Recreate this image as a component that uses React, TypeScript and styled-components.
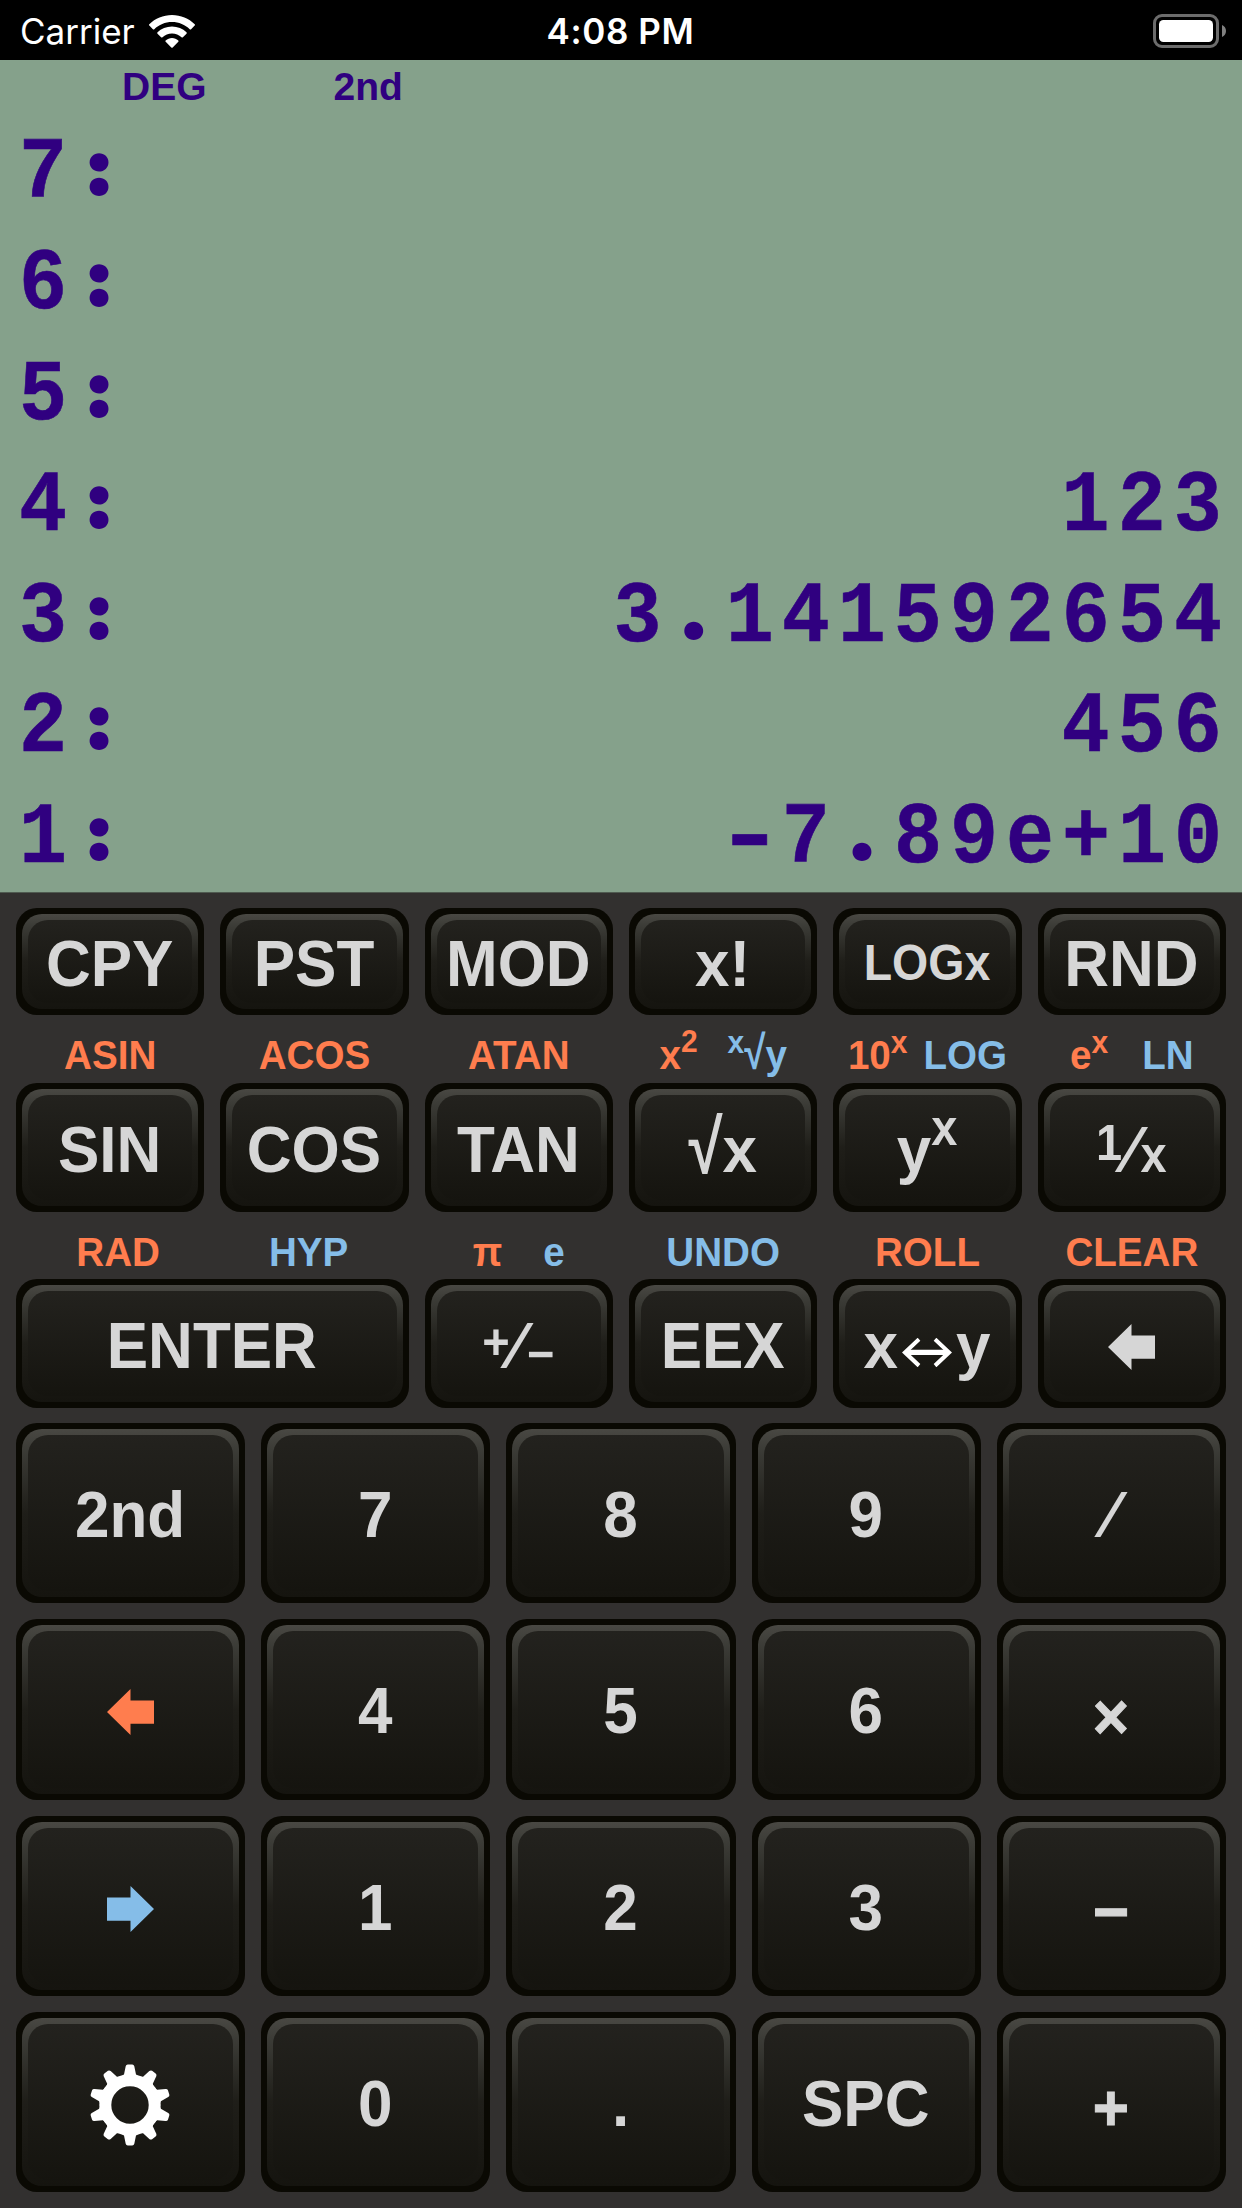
import React from "react";
import styled, { createGlobalStyle } from "styled-components";

const SANS = `"Liberation Sans", Arial, Helvetica, sans-serif`;
const ORANGE = "#ff7d4e";
const BLUE = "#85bde8";
const KEY_TEXT = "#d6d6d6";

const GlobalStyle = createGlobalStyle`
  body { margin: 0; background: #32302f; }
`;

const Screen = styled.div`
  width: 1242px;
  height: 2208px;
  display: flex;
  flex-direction: column;
  overflow: hidden;
  background: #32302f;
  font-family: ${SANS};
`;

const StatusBar = styled.header`
  height: 60px;
  box-sizing: border-box;
  padding: 0 16px 0 20px;
  display: grid;
  grid-template-columns: 1fr auto 1fr;
  align-items: center;
  background: #000;
  color: #fff;
  font-family: Inter, sans-serif;
  font-size: 35px;
  line-height: 62px;
`;

const CarrierGroup = styled.div`
  display: flex;
  align-items: center;
  gap: 14px;
`;

const Clock = styled.div`
  font-weight: 600;
  letter-spacing: 0.6px;
  margin-right: 5px;
`;

const BatterySlot = styled.div`
  display: flex;
  justify-content: flex-end;
`;

const Display = styled.section`
  height: 832px;
  flex: none;
  display: flex;
  flex-direction: column;
  background: #85a18b;
  color: #300080;
  border-bottom: 1px solid #4f5a50;
`;

const Annunciators = styled.div`
  height: 59.4px;
  flex: none;
  display: flex;
  gap: 127px;
  padding-left: 122px;
  font-size: 39px;
  font-weight: 700;
  line-height: 54px;
`;

const StackRow = styled.div`
  flex: none;
  height: 110.8px;
  display: flex;
  justify-content: space-between;
  padding: 0 12px 0 19px;
  font-family: "Liberation Mono", "Courier New", monospace;
  font-size: 87px;
  font-weight: 700;
  line-height: 110.8px;
  letter-spacing: 8.7px;
  -webkit-text-stroke: 0.6px #300080;
`;

const StackText = styled.span<{ $origin: string }>`
  display: block;
  white-space: nowrap;
  transform: scaleX(0.92);
  transform-origin: ${(p) => p.$origin} center;
`;

const RoundMark = styled.span`
  display: inline-block;
  width: 52.2px;
  margin-right: 8.7px;
  text-align: center;
  letter-spacing: 0;
  line-height: 1;
  font-family: Lato, sans-serif;
  font-weight: 900;
  font-size: 88px;
  -webkit-text-stroke: 9px #300080;
  transform: scale(0.88, 0.79);
  transform-origin: center 62%;
`;

const WideMark = styled.span`
  display: inline-block;
  width: 52.2px;
  margin-right: 8.7px;
  letter-spacing: 0;
  line-height: 1;
  transform: scaleX(1.5);
`;

const Keyboard = styled.main`
  flex: 1;
  display: flex;
  flex-direction: column;
  padding: 15px 16px 0;
`;

const KeyRow = styled.div<{ $cols: number; $height: number }>`
  flex: none;
  display: grid;
  grid-template-columns: repeat(${(p) => p.$cols}, 1fr);
  column-gap: 16px;
  height: ${(p) => p.$height}px;
`;

const NumberPad = styled.div`
  display: flex;
  flex-direction: column;
  gap: 16px;
  padding-top: 15px;
`;

const LegendRow = styled(KeyRow)``;

const Legend = styled.div<{ $span?: number; $gap?: number }>`
  grid-column: span ${(p) => p.$span ?? 1};
  display: flex;
  justify-content: center;
  gap: ${(p) => p.$gap ?? 0}px;
  font-size: 38.6px;
  font-weight: 700;
  line-height: 80px;
  white-space: nowrap;
`;

const LegendText = styled.span<{ $blue?: boolean }>`
  color: ${(p) => (p.$blue ? BLUE : ORANGE)};
  transform: scaleY(1.05);
`;

const Key = styled.button<{ $span?: number }>`
  grid-column: span ${(p) => p.$span ?? 1};
  appearance: none;
  margin: 0;
  border: 0;
  min-width: 0;
  box-sizing: border-box;
  padding: 6px;
  border-radius: 21px;
  background: #0a0903;
  display: flex;
  font-family: ${SANS};
`;

const Bevel = styled.span`
  flex: 1;
  display: flex;
  padding: 6px;
  border-radius: 20px;
  background: linear-gradient(#494843 0, #3c3c37 12%, #1f1e19 50%, #15140f 100%);
`;

const Face = styled.span<{ $size: number }>`
  flex: 1;
  display: flex;
  align-items: center;
  justify-content: center;
  border-radius: 20px;
  background: linear-gradient(#23221e, #15140f);
  color: ${KEY_TEXT};
  font-size: ${(p) => p.$size}px;
  font-weight: 700;
  line-height: 1;
  white-space: nowrap;
`;

const KeyLabel = styled.span<{ $drop: number }>`
  display: block;
  padding-top: ${(p) => 4 + p.$drop * 2}px;
  padding-right: 1px;
  transform: scaleY(1.055);
`;

const IconLabel = styled.span`
  display: flex;
  padding: 6px 1px 0 0;
`;

const Small = styled.span<{ $size: number }>`
  font-size: ${(p) => p.$size}px;
`;

const Sup = styled.span<{ $size: number; $up: number }>`
  font-size: ${(p) => p.$size}px;
  line-height: 0;
  vertical-align: ${(p) => p.$up}px;
`;

const Radical = styled.span`
  display: inline-block;
  line-height: 1;
  transform: scaleY(1.16);
  transform-origin: center 80%;
`;

const Slash = styled.span<{ $l: number; $r: number }>`
  margin-left: ${(p) => p.$l}px;
  margin-right: ${(p) => p.$r}px;
`;

const HeavySign = styled.span`
  -webkit-text-stroke: 1px ${KEY_TEXT};
`;

const SwapIcon = styled.svg`
  display: inline-block;
  margin: 0 4px 0 4px;
  vertical-align: 1px;
`;

function WifiIcon() {
  return (
    <svg width="46" height="33" viewBox="0 0 46 33" fill="#fff">
      <path d="M23 0C14.200 0 6.200 3.500.3 9.200c-.4.400-.4 1 0 1.400l3.600 3.600c.4.400 1 .4 1.400 0C9.900 9.800 16.100 7.100 23 7.100s13.100 2.700 17.700 7.100c.4.400 1 .4 1.400 0l3.600-3.600c.4-.4.4-1 0-1.400C39.800 3.500 31.800 0 23 0z" />
      <path d="M23 11.500c-5.600 0-10.700 2.200-14.500 5.800-.4.400-.4 1 0 1.400l3.600 3.600c.4.400 1 .4 1.400 0 2.500-2.300 5.800-3.700 9.500-3.700s7 1.400 9.500 3.700c.4.400 1 .4 1.400 0l3.600-3.600c.4-.4.4-1 0-1.400-3.800-3.600-8.900-5.800-14.500-5.800z" />
      <path d="M23 23c-2.400 0-4.600.9-6.300 2.400-.4.400-.5 1 0 1.400l5.600 5.700c.4.400 1 .4 1.400 0l5.600-5.700c.4-.4.400-1 0-1.400C27.600 23.900 25.400 23 23 23z" />
    </svg>
  );
}

function BatteryIcon() {
  return (
    <svg width="73" height="34" viewBox="0 0 73 34">
      <rect x="1.500" y="1.500" width="63" height="31" rx="7.500" fill="none" stroke="#6c6c6c" strokeWidth="3" />
      <rect x="6" y="6" width="54" height="22" rx="4.500" fill="#fff" />
      <path d="M69 11c2.400 1 4 3.300 4 6s-1.600 5-4 6z" fill="#808080" />
    </svg>
  );
}

function ArrowIcon({ color, right = false }: { color: string; right?: boolean }) {
  return (
    <svg width="47" height="46" viewBox="0 0 47 46">
      <path
        d={right ? "M47 23L23.500 46V34.800H0V11.500H23.500V0z" : "M0 23L23.500 0V11.500H47V34.800H23.500V46z"}
        fill={color}
      />
    </svg>
  );
}

const TEETH = Array.from({ length: 10 }, (_, i) => i * 36);

function GearIcon() {
  return (
    <svg width="82" height="82" viewBox="-41 -41 82 82" fill="#fff">
      <circle r="24.700" fill="none" stroke="#fff" strokeWidth="12" />
      {TEETH.map((angle) => (
        <path
          key={angle}
          transform={`rotate(${angle})`}
          d="M-8.500 -28.500L-6 -30.500L-4.300 -38.800Q-3.900 -40.600 -2.200 -40.600H2.200Q3.900 -40.600 4.300 -38.800L6 -30.500L8.500 -28.500z"
        />
      ))}
    </svg>
  );
}

interface KeyProps {
  children: React.ReactNode;
  span?: number;
  size?: number;
  drop?: number;
  icon?: boolean;
}

function CalcKey({ children, span, size = 62, drop = 0, icon = false }: KeyProps) {
  return (
    <Key $span={span}>
      <Bevel>
        <Face $size={size}>
          {icon ? <IconLabel>{children}</IconLabel> : <KeyLabel $drop={drop}>{children}</KeyLabel>}
        </Face>
      </Bevel>
    </Key>
  );
}

const STACK = [
  ["7:", ""],
  ["6:", ""],
  ["5:", ""],
  ["4:", "123"],
  ["3:", "3.141592654"],
  ["2:", "456"],
  ["1:", "-7.89e+10"],
];

function LcdText({ text }: { text: string }) {
  return (
    <>
      {text.split(/([:.-])/).map((part, i) => {
        if (part === ":" || part === ".") return <RoundMark key={i}>{part}</RoundMark>;
        if (part === "-") return <WideMark key={i}>{part}</WideMark>;
        return part;
      })}
    </>
  );
}

export default function App() {
  return (
    <Screen>
      <GlobalStyle />
      <StatusBar>
        <CarrierGroup>
          <span>Carrier</span>
          <WifiIcon />
        </CarrierGroup>
        <Clock>4:08 PM</Clock>
        <BatterySlot>
          <BatteryIcon />
        </BatterySlot>
      </StatusBar>

      <Display>
        <Annunciators>
          <span>DEG</span>
          <span>2nd</span>
        </Annunciators>
        {STACK.map(([level, value]) => (
          <StackRow key={level}>
            <StackText $origin="left"><LcdText text={level} /></StackText>
            <StackText $origin="right"><LcdText text={value} /></StackText>
          </StackRow>
        ))}
      </Display>

      <Keyboard>
        <KeyRow $cols={6} $height={107}>
          <CalcKey>CPY</CalcKey>
          <CalcKey>PST</CalcKey>
          <CalcKey>MOD</CalcKey>
          <CalcKey>x!</CalcKey>
          <CalcKey size={46.5}>LOGx</CalcKey>
          <CalcKey>RND</CalcKey>
        </KeyRow>

        <LegendRow $cols={6} $height={68}>
          <Legend><LegendText>ASIN</LegendText></Legend>
          <Legend><LegendText>ACOS</LegendText></Legend>
          <Legend><LegendText>ATAN</LegendText></Legend>
          <Legend $gap={30}>
            <LegendText>x<Sup $size={30} $up={16}>2</Sup></LegendText>
            <LegendText $blue><Sup $size={30} $up={15}>x</Sup><Radical>√</Radical>y</LegendText>
          </Legend>
          <Legend $gap={16}>
            <LegendText>10<Sup $size={30} $up={15}>x</Sup></LegendText>
            <LegendText $blue>LOG</LegendText>
          </Legend>
          <Legend $gap={34}>
            <LegendText>e<Sup $size={30} $up={15}>x</Sup></LegendText>
            <LegendText $blue>LN</LegendText>
          </Legend>
        </LegendRow>

        <KeyRow $cols={6} $height={129}>
          <CalcKey>SIN</CalcKey>
          <CalcKey>COS</CalcKey>
          <CalcKey>TAN</CalcKey>
          <CalcKey><Radical>√</Radical>x</CalcKey>
          <CalcKey>y<Sup $size={47} $up={26}>x</Sup></CalcKey>
          <CalcKey>
            <Sup $size={47} $up={12}>1</Sup>
            <Slash $l={4} $r={4}>⁄</Slash>
            <Small $size={47}>x</Small>
          </CalcKey>
        </KeyRow>

        <LegendRow $cols={6} $height={67}>
          <Legend $span={2} $gap={109}>
            <LegendText>RAD</LegendText>
            <LegendText $blue>HYP</LegendText>
          </Legend>
          <Legend $gap={41}>
            <LegendText>π</LegendText>
            <LegendText $blue>e</LegendText>
          </Legend>
          <Legend><LegendText $blue>UNDO</LegendText></Legend>
          <Legend><LegendText>ROLL</LegendText></Legend>
          <Legend><LegendText>CLEAR</LegendText></Legend>
        </LegendRow>

        <KeyRow $cols={6} $height={129}>
          <CalcKey span={2}>ENTER</CalcKey>
          <CalcKey>
            <Sup $size={47} $up={9}>+</Sup>
            <Slash $l={2} $r={5}>⁄</Slash>
            <Sup $size={47} $up={-3}>−</Sup>
          </CalcKey>
          <CalcKey>EEX</CalcKey>
          <CalcKey>
            x
            <SwapIcon width="50" height="28" viewBox="0 0 50 28" fill="none" stroke="#fff" strokeWidth="4">
              <path d="M4 14H46" strokeWidth="5" />
              <path d="M17 1.500L3 14L17 26.500M33 1.500L47 14L33 26.500" />
            </SwapIcon>
            y
          </CalcKey>
          <CalcKey icon><ArrowIcon color={KEY_TEXT} /></CalcKey>
        </KeyRow>

        <NumberPad>
          <KeyRow $cols={5} $height={180.3}>
            <CalcKey>2nd</CalcKey>
            <CalcKey>7</CalcKey>
            <CalcKey>8</CalcKey>
            <CalcKey>9</CalcKey>
            <CalcKey>⁄</CalcKey>
          </KeyRow>
          <KeyRow $cols={5} $height={180.3}>
            <CalcKey icon><ArrowIcon color={ORANGE} /></CalcKey>
            <CalcKey>4</CalcKey>
            <CalcKey>5</CalcKey>
            <CalcKey>6</CalcKey>
            <CalcKey drop={5}><HeavySign>×</HeavySign></CalcKey>
          </KeyRow>
          <KeyRow $cols={5} $height={180.3}>
            <CalcKey icon><ArrowIcon color={BLUE} right /></CalcKey>
            <CalcKey>1</CalcKey>
            <CalcKey>2</CalcKey>
            <CalcKey>3</CalcKey>
            <CalcKey drop={4}><HeavySign>−</HeavySign></CalcKey>
          </KeyRow>
          <KeyRow $cols={5} $height={180.3}>
            <CalcKey icon><GearIcon /></CalcKey>
            <CalcKey>0</CalcKey>
            <CalcKey>.</CalcKey>
            <CalcKey>SPC</CalcKey>
            <CalcKey drop={4}><HeavySign>+</HeavySign></CalcKey>
          </KeyRow>
        </NumberPad>
      </Keyboard>
    </Screen>
  );
}
